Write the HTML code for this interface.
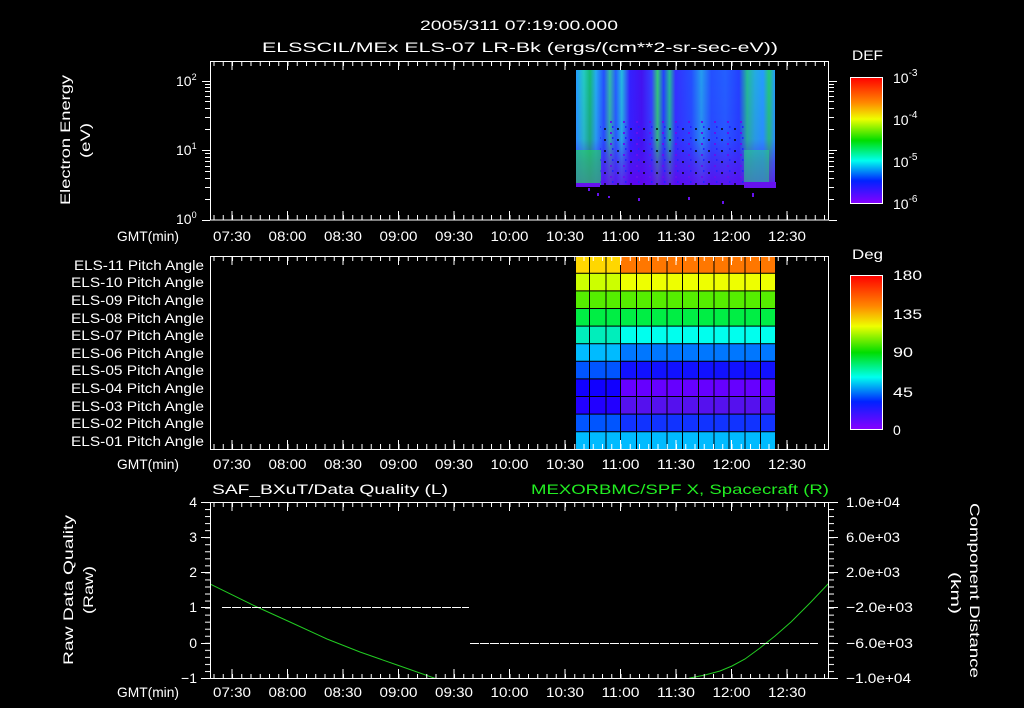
<!DOCTYPE html>
<html><head><meta charset="utf-8"><style>
html,body{margin:0;padding:0;background:#000;width:1024px;height:708px;overflow:hidden}
svg{display:block}
text{font-family:"Liberation Sans",sans-serif;font-size:14px;fill:#fff}
</style></head><body>
<svg width="1024" height="708" viewBox="0 0 1024 708">
<defs>
<pattern id="xt" x="232" y="0" width="9.25" height="708" patternUnits="userSpaceOnUse"><rect x="0" y="0" width="1" height="708" fill="#fff"/></pattern>
<pattern id="yb" x="0" y="502" width="708" height="7.04" patternUnits="userSpaceOnUse"><rect x="0" y="0" width="708" height="1" fill="#fff"/></pattern>
<pattern id="spk" x="576" y="70" width="13" height="11" patternUnits="userSpaceOnUse"><rect x="2" y="3" width="2" height="2" fill="#000" opacity="0.7"/><rect x="8" y="7" width="2" height="2" fill="#6611ee"/><rect x="10" y="1" width="1.5" height="2" fill="#2222ff"/></pattern>
<linearGradient id="spx" x1="0" x2="1" y1="0" y2="0">
<stop offset="0" stop-color="#22aaff"/><stop offset="0.04" stop-color="#22ddbb"/><stop offset="0.07" stop-color="#11cc66"/><stop offset="0.1" stop-color="#22bbee"/><stop offset="0.14" stop-color="#2255ff"/><stop offset="0.17" stop-color="#33cc99"/><stop offset="0.2" stop-color="#2266ff"/><stop offset="0.23" stop-color="#22ccdd"/><stop offset="0.27" stop-color="#3322ff"/><stop offset="0.33" stop-color="#4411ee"/><stop offset="0.38" stop-color="#3344ff"/><stop offset="0.41" stop-color="#33dd66"/><stop offset="0.44" stop-color="#2244ff"/><stop offset="0.47" stop-color="#22cc88"/><stop offset="0.5" stop-color="#3333ff"/><stop offset="0.58" stop-color="#2255ff"/><stop offset="0.63" stop-color="#22aaee"/><stop offset="0.68" stop-color="#2255ff"/><stop offset="0.75" stop-color="#2266ff"/><stop offset="0.82" stop-color="#2244ff"/><stop offset="0.86" stop-color="#22cc88"/><stop offset="0.9" stop-color="#22bbdd"/><stop offset="0.94" stop-color="#22aaff"/><stop offset="0.97" stop-color="#22dd66"/><stop offset="1" stop-color="#22aaff"/>
</linearGradient>
<linearGradient id="spy" x1="0" x2="0" y1="0" y2="1">
<stop offset="0" stop-color="#3322ff" stop-opacity="0.1"/><stop offset="0.6" stop-color="#4411ff" stop-opacity="0.2"/><stop offset="0.8" stop-color="#5511ee" stop-opacity="0.6"/><stop offset="1" stop-color="#6600ee" stop-opacity="0.8"/>
</linearGradient>
<linearGradient id="cb1" x1="0" x2="0" y1="0" y2="1">
<stop offset="0" stop-color="#ff0000"/><stop offset="0.2" stop-color="#ff8800"/><stop offset="0.33" stop-color="#eeff00"/><stop offset="0.5" stop-color="#00dd00"/><stop offset="0.66" stop-color="#00ffee"/><stop offset="0.82" stop-color="#0022ff"/><stop offset="1" stop-color="#8800ff"/>
</linearGradient>
<clipPath id="bc"><rect x="210" y="502" width="619" height="176"/></clipPath>
</defs>

<text x="420" y="30" font-size="16" textLength="198" lengthAdjust="spacingAndGlyphs">2005/311 07:19:00.000</text>
<text x="262" y="52" font-size="16" textLength="516" lengthAdjust="spacingAndGlyphs">ELSSCIL/MEx ELS-07 LR-Bk  (ergs/(cm**2-sr-sec-eV))</text>

<!-- top plot -->
<rect x="576" y="70" width="199" height="115" fill="url(#spx)"/>
<rect x="576" y="70" width="199" height="115" fill="url(#spy)"/>
<rect x="576" y="150" width="25" height="35" fill="#22dd55" opacity="0.6"/>
<rect x="744" y="150" width="25" height="35" fill="#22dd88" opacity="0.5"/>
<rect x="600" y="120" width="144" height="65" fill="url(#spk)"/>
<rect x="744" y="182" width="32" height="6" fill="#6611ee"/>
<rect x="576" y="183" width="24" height="4" fill="#6611ee"/>
<path d="M588 188h2v3h-2zM597 193h2v3h-2zM608 196h2v2h-2zM638 198h2v3h-2zM688 197h2v3h-2zM722 201h2v3h-2zM752 193h2v4h-2z" fill="#6611ee"/>
<rect x="210.5" y="61.5" width="618" height="158.5" fill="none" stroke="#fff"/>
<rect x="210" y="61" width="619" height="5" fill="url(#xt)"/>
<rect x="210" y="215" width="619" height="5" fill="url(#xt)"/>
<path d="M232 61v9M287.5 61v9M343 61v9M398.5 61v9M454 61v9M509.5 61v9M565 61v9M620.5 61v9M676 61v9M731.5 61v9M787 61v9M232 220v-9M287.5 220v-9M343 220v-9M398.5 220v-9M454 220v-9M509.5 220v-9M565 220v-9M620.5 220v-9M676 220v-9M731.5 220v-9M787 220v-9" stroke="#fff"/>
<path d="M202 220.5h8M202 150.5h8M202 81.5h8M205 199.5h5M205 187.5h5M205 178.5h5M205 171.5h5M205 166.5h5M205 161.5h5M205 157.5h5M205 153.5h5M205 129.5h5M205 117.5h5M205 108.5h5M205 101.5h5M205 96.5h5M205 91.5h5M205 87.5h5M205 84.5h5M829 220.5h8M829 150.5h8M829 81.5h8M829 199.5h5M829 187.5h5M829 178.5h5M829 171.5h5M829 166.5h5M829 161.5h5M829 157.5h5M829 153.5h5M829 129.5h5M829 117.5h5M829 108.5h5M829 101.5h5M829 96.5h5M829 91.5h5M829 87.5h5M829 84.5h5" stroke="#fff"/>
<text x="176" y="224" font-size="14">10<tspan font-size="9" dy="-6">0</tspan></text>
<text x="176" y="155" font-size="14">10<tspan font-size="9" dy="-6">1</tspan></text>
<text x="176" y="86" font-size="14">10<tspan font-size="9" dy="-6">2</tspan></text>
<text transform="translate(70,205) rotate(-90)" textLength="130" lengthAdjust="spacingAndGlyphs">Electron Energy</text>
<text transform="translate(90,158) rotate(-90)" textLength="35" lengthAdjust="spacingAndGlyphs">(eV)</text>
<g>
<text x="213" y="241" textLength="38" lengthAdjust="spacingAndGlyphs">07:30</text><text x="268.5" y="241" textLength="38" lengthAdjust="spacingAndGlyphs">08:00</text><text x="324" y="241" textLength="38" lengthAdjust="spacingAndGlyphs">08:30</text><text x="379.5" y="241" textLength="38" lengthAdjust="spacingAndGlyphs">09:00</text><text x="435" y="241" textLength="38" lengthAdjust="spacingAndGlyphs">09:30</text><text x="490.5" y="241" textLength="38" lengthAdjust="spacingAndGlyphs">10:00</text><text x="546" y="241" textLength="38" lengthAdjust="spacingAndGlyphs">10:30</text><text x="601.5" y="241" textLength="38" lengthAdjust="spacingAndGlyphs">11:00</text><text x="657" y="241" textLength="38" lengthAdjust="spacingAndGlyphs">11:30</text><text x="712.5" y="241" textLength="38" lengthAdjust="spacingAndGlyphs">12:00</text><text x="768" y="241" textLength="38" lengthAdjust="spacingAndGlyphs">12:30</text>
</g>
<text x="117" y="241" textLength="62" lengthAdjust="spacingAndGlyphs">GMT(min)</text>
<rect x="850.5" y="77.5" width="32" height="126" fill="url(#cb1)" stroke="#fff"/>
<text x="852" y="60" font-size="16" textLength="31" lengthAdjust="spacingAndGlyphs">DEF</text>
<text x="893" y="83" font-size="15">10<tspan font-size="10" dy="-7">-3</tspan></text>
<text x="893" y="125" font-size="15">10<tspan font-size="10" dy="-7">-4</tspan></text>
<text x="893" y="167" font-size="15">10<tspan font-size="10" dy="-7">-5</tspan></text>
<text x="893" y="209" font-size="15">10<tspan font-size="10" dy="-7">-6</tspan></text>

<!-- middle plot -->
<g>
<rect x="576" y="256" width="199" height="194" fill="#000"/>
<rect x="576" y="256" width="45" height="17" fill="#ffd700"/><rect x="621" y="256" width="154" height="17" fill="#ff7700"/>
<rect x="576" y="273.6" width="45" height="17" fill="#ccff00"/><rect x="621" y="273.6" width="154" height="17" fill="#eeff00"/>
<rect x="576" y="291.2" width="199" height="17" fill="#55ee00"/>
<rect x="576" y="308.8" width="199" height="17" fill="#00ee44"/>
<rect x="576" y="326.4" width="45" height="17" fill="#00eebb"/><rect x="621" y="326.4" width="154" height="17" fill="#00ffee"/>
<rect x="576" y="344" width="45" height="17" fill="#00bbff"/><rect x="621" y="344" width="154" height="17" fill="#0077ff"/>
<rect x="576" y="361.6" width="45" height="17" fill="#0055ff"/><rect x="621" y="361.6" width="154" height="17" fill="#1111ff"/>
<rect x="576" y="379.2" width="45" height="17" fill="#1100ff"/><rect x="621" y="379.2" width="154" height="17" fill="#6600ff"/>
<rect x="576" y="396.8" width="45" height="17" fill="#2200ff"/><rect x="621" y="396.8" width="154" height="17" fill="#5511ee"/>
<rect x="576" y="414.4" width="45" height="17" fill="#0055ff"/><rect x="621" y="414.4" width="154" height="17" fill="#1133ff"/>
<rect x="576" y="432" width="199" height="17" fill="#00bbff"/>
<path d="M589.5 256v194M606 256v194M620.5 256v194M636.5 256v194M651.5 256v194M667 256v194M682.5 256v194M698.5 256v194M714 256v194M729 256v194M745 256v194M760.5 256v194M576 273.3h199M576 290.9h199M576 308.5h199M576 326.1h199M576 343.7h199M576 361.3h199M576 378.9h199M576 396.5h199M576 414.1h199M576 431.7h199" stroke="#000"/>
</g>
<rect x="210.5" y="256.5" width="618" height="193" fill="none" stroke="#fff"/>
<rect x="210" y="256" width="619" height="5" fill="url(#xt)"/>
<rect x="210" y="444" width="619" height="5" fill="url(#xt)"/>
<path d="M232 256v9M287.5 256v9M343 256v9M398.5 256v9M454 256v9M509.5 256v9M565 256v9M620.5 256v9M676 256v9M731.5 256v9M787 256v9M232 449v-9M287.5 449v-9M343 449v-9M398.5 449v-9M454 449v-9M509.5 449v-9M565 449v-9M620.5 449v-9M676 449v-9M731.5 449v-9M787 449v-9" stroke="#fff"/>
<g>
<text x="74" y="270" textLength="130" lengthAdjust="spacingAndGlyphs">ELS-11 Pitch Angle</text><text x="71" y="287" textLength="133" lengthAdjust="spacingAndGlyphs">ELS-10 Pitch Angle</text><text x="71" y="305" textLength="133" lengthAdjust="spacingAndGlyphs">ELS-09 Pitch Angle</text><text x="71" y="323" textLength="133" lengthAdjust="spacingAndGlyphs">ELS-08 Pitch Angle</text><text x="71" y="340" textLength="133" lengthAdjust="spacingAndGlyphs">ELS-07 Pitch Angle</text><text x="71" y="358" textLength="133" lengthAdjust="spacingAndGlyphs">ELS-06 Pitch Angle</text><text x="71" y="375" textLength="133" lengthAdjust="spacingAndGlyphs">ELS-05 Pitch Angle</text><text x="71" y="393" textLength="133" lengthAdjust="spacingAndGlyphs">ELS-04 Pitch Angle</text><text x="71" y="411" textLength="133" lengthAdjust="spacingAndGlyphs">ELS-03 Pitch Angle</text><text x="71" y="428" textLength="133" lengthAdjust="spacingAndGlyphs">ELS-02 Pitch Angle</text><text x="71" y="446" textLength="133" lengthAdjust="spacingAndGlyphs">ELS-01 Pitch Angle</text>
</g>
<g>
<text x="213" y="469" textLength="38" lengthAdjust="spacingAndGlyphs">07:30</text><text x="268.5" y="469" textLength="38" lengthAdjust="spacingAndGlyphs">08:00</text><text x="324" y="469" textLength="38" lengthAdjust="spacingAndGlyphs">08:30</text><text x="379.5" y="469" textLength="38" lengthAdjust="spacingAndGlyphs">09:00</text><text x="435" y="469" textLength="38" lengthAdjust="spacingAndGlyphs">09:30</text><text x="490.5" y="469" textLength="38" lengthAdjust="spacingAndGlyphs">10:00</text><text x="546" y="469" textLength="38" lengthAdjust="spacingAndGlyphs">10:30</text><text x="601.5" y="469" textLength="38" lengthAdjust="spacingAndGlyphs">11:00</text><text x="657" y="469" textLength="38" lengthAdjust="spacingAndGlyphs">11:30</text><text x="712.5" y="469" textLength="38" lengthAdjust="spacingAndGlyphs">12:00</text><text x="768" y="469" textLength="38" lengthAdjust="spacingAndGlyphs">12:30</text>
</g>
<text x="117" y="469" textLength="62" lengthAdjust="spacingAndGlyphs">GMT(min)</text>
<rect x="850.5" y="275.5" width="32" height="154" fill="url(#cb1)" stroke="#fff"/>
<text x="852" y="259" font-size="16" textLength="31" lengthAdjust="spacingAndGlyphs">Deg</text>
<text x="893" y="280" font-size="16" textLength="29" lengthAdjust="spacingAndGlyphs">180</text><text x="893" y="319" font-size="16" textLength="29" lengthAdjust="spacingAndGlyphs">135</text><text x="893" y="357" font-size="16" textLength="20" lengthAdjust="spacingAndGlyphs">90</text><text x="893" y="397" font-size="16" textLength="20" lengthAdjust="spacingAndGlyphs">45</text><text x="893" y="435" font-size="16">0</text>

<!-- bottom plot -->
<text x="212" y="494" font-size="15" textLength="236" lengthAdjust="spacingAndGlyphs">SAF_BXuT/Data Quality (L)</text>
<text x="531" y="494" font-size="15" textLength="298" lengthAdjust="spacingAndGlyphs" style="fill:#22ee22">MEXORBMC/SPF X, Spacecraft (R)</text>
<g clip-path="url(#bc)">
<polyline points="210,584 257,607 290,622 327,639 360,652 400,666 437,679 445,682" fill="none" stroke="#22cc22"/>
<polyline points="682,681 690,678 705,675 720,671 732,666 745,659 760,648 775,636 791,622 810,603 829,583" fill="none" stroke="#22cc22"/>
</g>
<path d="M222 607.5h247M470 643.5h348" stroke="#fff" stroke-dasharray="9 1"/>
<rect x="210.5" y="502.5" width="618" height="176" fill="none" stroke="#fff"/>
<rect x="210" y="502" width="619" height="5" fill="url(#xt)"/>
<rect x="210" y="674" width="619" height="5" fill="url(#xt)"/>
<path d="M232 502v9M287.5 502v9M343 502v9M398.5 502v9M454 502v9M509.5 502v9M565 502v9M620.5 502v9M676 502v9M731.5 502v9M787 502v9M232 678v-9M287.5 678v-9M343 678v-9M398.5 678v-9M454 678v-9M509.5 678v-9M565 678v-9M620.5 678v-9M676 678v-9M731.5 678v-9M787 678v-9" stroke="#fff"/>
<rect x="205" y="502" width="5" height="177" fill="url(#yb)"/>
<rect x="829" y="502" width="5" height="177" fill="url(#yb)"/>
<path d="M201 502.5h9M201 537.5h9M201 572.5h9M201 607.5h9M201 643.5h9M201 678.5h9M829 502.5h9M829 537.5h9M829 572.5h9M829 607.5h9M829 643.5h9M829 678.5h9" stroke="#fff"/>
<g text-anchor="end">
<text x="197" y="507">4</text><text x="197" y="542">3</text><text x="197" y="577">2</text><text x="197" y="612">1</text><text x="197" y="648">0</text><text x="197" y="683">−1</text>
</g>
<g>
<text x="846" y="507" textLength="54" lengthAdjust="spacingAndGlyphs">1.0e+04</text><text x="846" y="542" textLength="54" lengthAdjust="spacingAndGlyphs">6.0e+03</text><text x="846" y="577" textLength="54" lengthAdjust="spacingAndGlyphs">2.0e+03</text><text x="846" y="612" textLength="67" lengthAdjust="spacingAndGlyphs">−2.0e+03</text><text x="846" y="648" textLength="67" lengthAdjust="spacingAndGlyphs">−6.0e+03</text><text x="846" y="683" textLength="65" lengthAdjust="spacingAndGlyphs">−1.0e+04</text>
</g>
<text transform="translate(73,665) rotate(-90)" textLength="150" lengthAdjust="spacingAndGlyphs">Raw Data Quality</text>
<text transform="translate(93,614) rotate(-90)" textLength="48" lengthAdjust="spacingAndGlyphs">(Raw)</text>
<text transform="translate(970,503) rotate(90)" textLength="175" lengthAdjust="spacingAndGlyphs">Component Distance</text>
<text transform="translate(951,572) rotate(90)" textLength="42" lengthAdjust="spacingAndGlyphs">(km)</text>
<g>
<text x="213" y="697" textLength="38" lengthAdjust="spacingAndGlyphs">07:30</text><text x="268.5" y="697" textLength="38" lengthAdjust="spacingAndGlyphs">08:00</text><text x="324" y="697" textLength="38" lengthAdjust="spacingAndGlyphs">08:30</text><text x="379.5" y="697" textLength="38" lengthAdjust="spacingAndGlyphs">09:00</text><text x="435" y="697" textLength="38" lengthAdjust="spacingAndGlyphs">09:30</text><text x="490.5" y="697" textLength="38" lengthAdjust="spacingAndGlyphs">10:00</text><text x="546" y="697" textLength="38" lengthAdjust="spacingAndGlyphs">10:30</text><text x="601.5" y="697" textLength="38" lengthAdjust="spacingAndGlyphs">11:00</text><text x="657" y="697" textLength="38" lengthAdjust="spacingAndGlyphs">11:30</text><text x="712.5" y="697" textLength="38" lengthAdjust="spacingAndGlyphs">12:00</text><text x="768" y="697" textLength="38" lengthAdjust="spacingAndGlyphs">12:30</text>
</g>
<text x="117" y="697" textLength="62" lengthAdjust="spacingAndGlyphs">GMT(min)</text>
</svg>
</body></html>
